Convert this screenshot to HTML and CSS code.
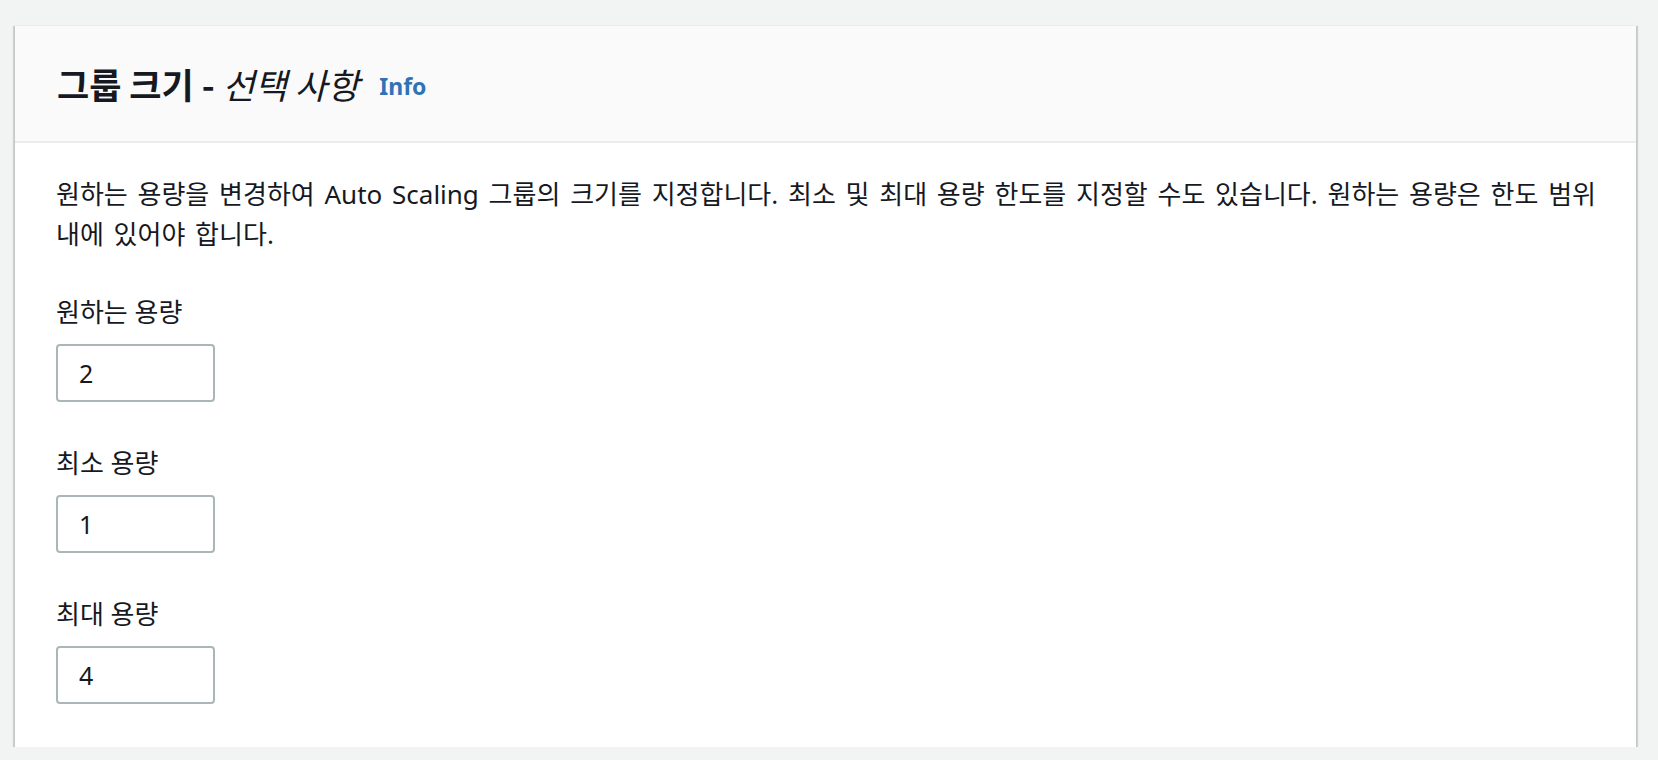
FILE: index.html
```html
<!DOCTYPE html>
<html>
<head>
    <title>그룹 크기</title>
    <link rel="stylesheet" href="styles.css">
</head>
<body>
    <div class="card">
        <div class="card_header">
            <h2 class="card_title">그룹 크기 - <i>선택 사항</i></h2>
            <a class="info_link" href="#">Info</a>
        </div>
        <div class="card_body">
            <p class="description">원하는 용량을 변경하여 Auto Scaling 그룹의 크기를 지정합니다. 최소 및 최대 용량 한도를 지정할 수도 있습니다. 원하는 용량은 한도 범위<br>내에 있어야 합니다.</p>

            <div class="field">
                <label for="input_desired">원하는 용량</label>
                <input id="input_desired" class="number_input" type="text" value="2">
            </div>
            <div class="field">
                <label for="input_min">최소 용량</label>
                <input id="input_min" class="number_input" type="text" value="1">
            </div>
            <div class="field">
                <label for="input_max">최대 용량</label>
                <input id="input_max" class="number_input" type="text" value="4">
            </div>
        </div>
    </div>
</body>
</html>
```

FILE: styles.css
```css
body {
	margin: 0;
	background-color: #f2f3f3;
	color: #16191f;
	font-family: "Noto Sans", "Noto Sans CJK KR", sans-serif;
}

.card {
	margin: 25px 22px 0 15px;
	background-color: #ffffff;
	border-top: 1px solid #eaeded;
	box-shadow: 0 2px 1px 0 rgba(0, 28, 36, 0.3), 2px 1px 1px 0 rgba(0, 28, 36, 0.15), -2px 1px 1px 0 rgba(0, 28, 36, 0.15);
}

.card_header {
	display: flex;
	align-items: center;
	height: 115px;
	padding: 0 42px;
	background-color: #fafafa;
	border-bottom: 2px solid #eaeded;
}

.card_title {
	margin: 0;
	font-size: 35px;
	line-height: 42px;
	font-weight: bold;
	font-family: "Noto Sans CJK KR", sans-serif;
}

.card_title i {
	font-weight: normal;
}

.info_link {
	margin-left: 20px;
	margin-top: 4px;
	color: #2f72b8;
	font-size: 23px;
	font-weight: bold;
	text-decoration: none;
}

.card_body {
	padding: 31px 40px 43px 41px;
}

.description {
	margin: 0 0 41px 0;
	font-size: 26px;
	line-height: 40px;
	word-spacing: 3px;
}

.field {
	display: flex;
	flex-direction: column;
	align-items: flex-start;
	margin-bottom: 44px;
}

.field:last-child {
	margin-bottom: 0;
}

.field label {
	font-size: 26px;
	line-height: 34px;
	margin-bottom: 15px;
}

.number_input {
	box-sizing: border-box;
	width: 159px;
	height: 58px;
	padding: 0 21px;
	border: 2px solid #aab7b8;
	border-radius: 4px;
	background-color: #ffffff;
	color: #16191f;
	font-family: "Noto Sans", sans-serif;
	font-size: 25px;
}
```
